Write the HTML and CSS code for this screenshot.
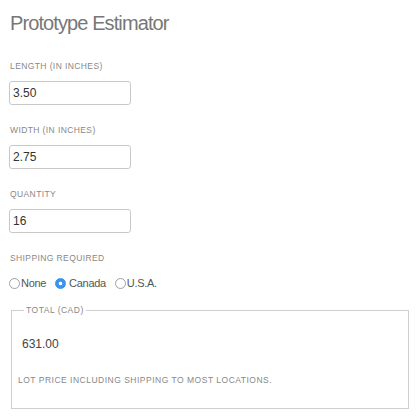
FILE: index.html
```html
<!DOCTYPE html>
<html>
<head>
    <title>Prototype Estimator</title>
    <link rel="stylesheet" href="styles.css">
</head>
<body>
    <div class="estimator">
        <h1>Prototype Estimator</h1>

        <label class="field-label" for="length">Length (in inches)</label>
        <input class="field" id="length" type="text" value="3.50">

        <label class="field-label" for="width">Width (in inches)</label>
        <input class="field" id="width" type="text" value="2.75">

        <label class="field-label" for="quantity">Quantity</label>
        <input class="field" id="quantity" type="text" value="16">

        <div class="field-label">Shipping required</div>
        <div class="radios">
            <label class="radio"><input type="radio" name="shipping" value="none">None</label>
            <label class="radio"><input type="radio" name="shipping" value="ca" checked>Canada</label>
            <label class="radio"><input type="radio" name="shipping" value="us">U.S.A.</label>
        </div>

        <fieldset class="total">
            <legend>Total (CAD)</legend>
            <div class="total-value">631.00</div>
            <div class="total-note">Lot price including shipping to most locations.</div>
        </fieldset>
    </div>
</body>
</html>
```

FILE: styles.css
```css
body {
    margin: 0;
    font-family: "Liberation Sans", Arial, sans-serif;
    background-color: #fff;
    color: #333;
}
.estimator {
    padding: 0 9px;
}
h1 {
    margin: 10px 0 0 1px;
    font-size: 20px;
    line-height: 26px;
    font-weight: normal;
    letter-spacing: -0.9px;
    color: #777;
}
.field-label {
    display: block;
    margin: 24px 0 9px 1px;
    font-size: 8.5px;
    line-height: 12px;
    letter-spacing: 0.4px;
    text-transform: uppercase;
    color: #888;
}
.field {
    display: block;
    box-sizing: border-box;
    width: 122px;
    height: 24px;
    margin: 0 0 -5px 0;
    padding: 0 3px;
    font-family: inherit;
    font-size: 12px;
    color: #333;
    border: 1px solid #c8c8c8;
    border-radius: 3px;
    outline: none;
}
.radios {
    display: flex;
    gap: 9px;
    margin-top: 12px;
    height: 14px;
    align-items: center;
    font-size: 11px;
    letter-spacing: -0.3px;
    color: #555;
}
.radio {
    display: flex;
    align-items: center;
    gap: 1px;
}
.radio input {
    appearance: none;
    -webkit-appearance: none;
    box-sizing: border-box;
    width: 11px;
    height: 11px;
    margin: 0;
    border: 1px solid #a0a0a0;
    border-radius: 50%;
    background: #fff;
}
.radio input:checked {
    border-color: #3a8ee6;
    background: radial-gradient(circle, #fff 0 1.6px, #3b94f0 2.1px);
    margin-right: 2px;
}
.total {
    margin: 14px 2px 0 2px;
    padding: 0 6px 22px 12px;
    border: 1px solid #cfcfcf;
}
.total legend {
    padding: 0 2px;
    font-size: 8.5px;
    line-height: 12px;
    letter-spacing: 0.5px;
    text-transform: uppercase;
    color: #888;
}
.total-value {
    margin: 21px 0 0 -2px;
    font-size: 12px;
    line-height: 14px;
    color: #444;
}
.total-note {
    margin: 23px 0 0 -6px;
    font-size: 8.5px;
    line-height: 12px;
    letter-spacing: 0.5px;
    text-transform: uppercase;
    color: #888;
}
```
